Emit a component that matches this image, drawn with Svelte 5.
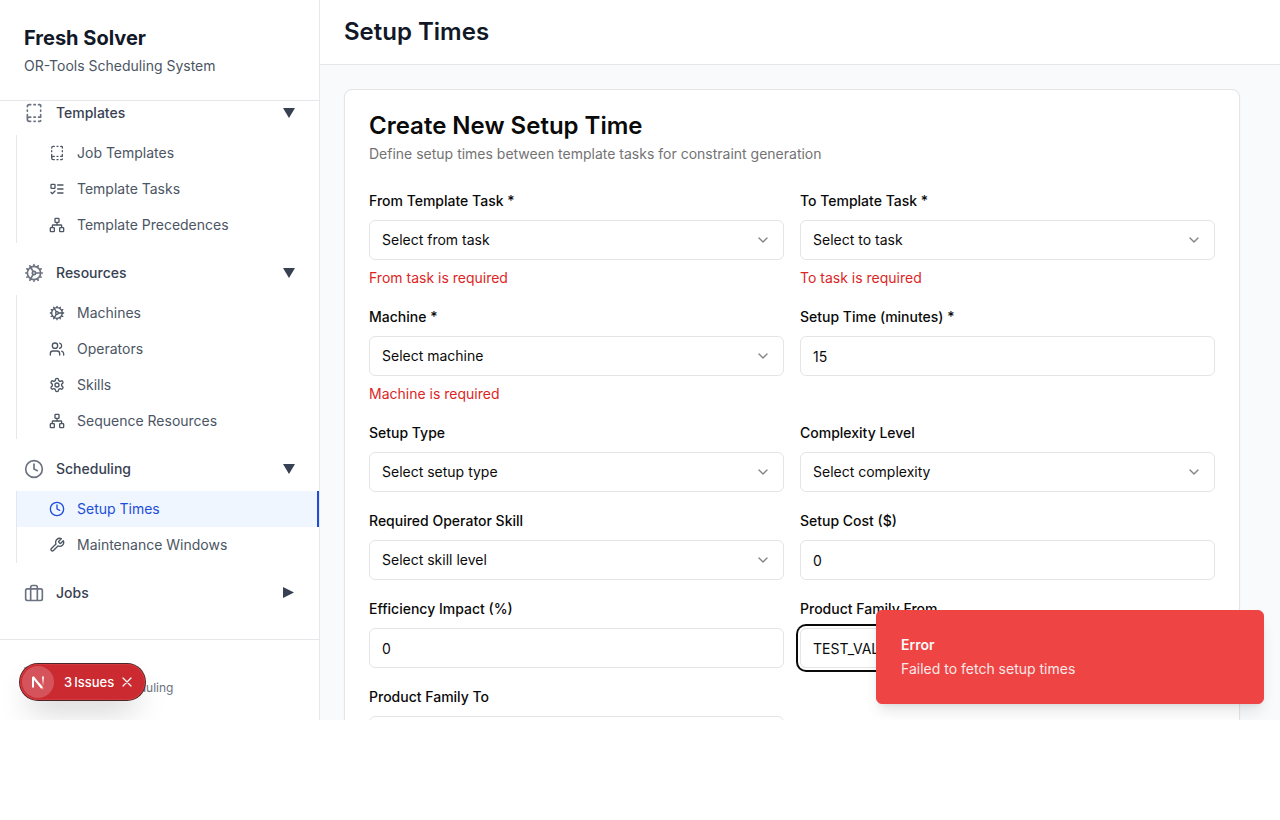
<script>
  const icons = {
    template:
      'M12 17h1.5M12 22h1.5M12 2h1.5M17.5 22H19a1 1 0 0 0 1-1M17.5 2H19a1 1 0 0 1 1 1v1.5M20 14v3h-2.5M20 8.5V10M4 10V8.5M4 19.5V14M4 4.5A2.5 2.5 0 0 1 6.5 2H8M8 22H6.5a1 1 0 0 1 0-5H8',
    tasks:
      'M4 5h4a1 1 0 0 1 1 1v4a1 1 0 0 1-1 1H4a1 1 0 0 1-1-1V6a1 1 0 0 1 1-1zM3 17l2 2 4-4M13 6h8M13 12h8M13 18h8',
    network:
      'M17 16h4a1 1 0 0 1 1 1v4a1 1 0 0 1-1 1h-4a1 1 0 0 1-1-1v-4a1 1 0 0 1 1-1zM3 16h4a1 1 0 0 1 1 1v4a1 1 0 0 1-1 1H3a1 1 0 0 1-1-1v-4a1 1 0 0 1 1-1zM10 2h4a1 1 0 0 1 1 1v4a1 1 0 0 1-1 1h-4a1 1 0 0 1-1-1V3a1 1 0 0 1 1-1zM5 16v-3a1 1 0 0 1 1-1h12a1 1 0 0 1 1 1v3M12 12V8',
    cog: 'M12 20a8 8 0 1 0 0-16 8 8 0 0 0 0 16ZM12 14a2 2 0 1 0 0-4 2 2 0 0 0 0 4ZM12 2v2M12 22v-2M17 20.66l-1-1.73M11 10.27 7 3.34M20.66 17l-1.73-1M3.34 7l1.73 1M14 12h8M2 12h2M20.66 7l-1.73 1M3.34 17l1.73-1M17 3.34l-1 1.73M11 13.73l-4 6.93',
    users:
      'M16 21v-2a4 4 0 0 0-4-4H6a4 4 0 0 0-4 4v2M9 11a4 4 0 1 0 0-8 4 4 0 0 0 0 8zM22 21v-2a4 4 0 0 0-3-3.87M16 3.13a4 4 0 0 1 0 7.75',
    settings:
      'M12.22 2h-.44a2 2 0 0 0-2 2v.18a2 2 0 0 1-1 1.73l-.43.25a2 2 0 0 1-2 0l-.15-.08a2 2 0 0 0-2.73.73l-.22.38a2 2 0 0 0 .73 2.73l.15.1a2 2 0 0 1 1 1.72v.51a2 2 0 0 1-1 1.74l-.15.09a2 2 0 0 0-.73 2.73l.22.38a2 2 0 0 0 2.73.73l.15-.08a2 2 0 0 1 2 0l.43.25a2 2 0 0 1 1 1.73V20a2 2 0 0 0 2 2h.44a2 2 0 0 0 2-2v-.18a2 2 0 0 1 1-1.73l.43-.25a2 2 0 0 1 2 0l.15.08a2 2 0 0 0 2.73-.73l.22-.39a2 2 0 0 0-.73-2.73l-.15-.08a2 2 0 0 1-1-1.74v-.5a2 2 0 0 1 1-1.74l.15-.09a2 2 0 0 0 .73-2.73l-.22-.38a2 2 0 0 0-2.73-.73l-.15.08a2 2 0 0 1-2 0l-.43-.25a2 2 0 0 1-1-1.73V4a2 2 0 0 0-2-2zM12 15a3 3 0 1 0 0-6 3 3 0 0 0 0 6z',
    clock: 'M12 22a10 10 0 1 0 0-20 10 10 0 0 0 0 20zM12 6v6l4 2',
    wrench:
      'M14.7 6.3a1 1 0 0 0 0 1.4l1.6 1.6a1 1 0 0 0 1.4 0l3.77-3.77a6 6 0 0 1-7.94 7.94l-6.91 6.91a2.12 2.12 0 0 1-3-3l6.91-6.91a6 6 0 0 1 7.94-7.94l-3.76 3.76z',
    briefcase:
      'M4 7h16a2 2 0 0 1 2 2v10a2 2 0 0 1-2 2H4a2 2 0 0 1-2-2V9a2 2 0 0 1 2-2zM16 21V5a2 2 0 0 0-2-2h-4a2 2 0 0 0-2 2v16',
  };

  let groups = $state([
    {
      label: 'Templates', icon: 'template', open: true,
      items: [
        { label: 'Job Templates', icon: 'template' },
        { label: 'Template Tasks', icon: 'tasks' },
        { label: 'Template Precedences', icon: 'network' },
      ],
    },
    {
      label: 'Resources', icon: 'cog', open: true,
      items: [
        { label: 'Machines', icon: 'cog' },
        { label: 'Operators', icon: 'users' },
        { label: 'Skills', icon: 'settings' },
        { label: 'Sequence Resources', icon: 'network' },
      ],
    },
    {
      label: 'Scheduling', icon: 'clock', open: true,
      items: [
        { label: 'Setup Times', icon: 'clock', active: true },
        { label: 'Maintenance Windows', icon: 'wrench' },
      ],
    },
    { label: 'Jobs', icon: 'briefcase', open: false, items: [] },
  ]);

  const fields = [
    { id: 'from-task', label: 'From Template Task *', select: 'Select from task', error: 'From task is required' },
    { id: 'to-task', label: 'To Template Task *', select: 'Select to task', error: 'To task is required' },
    { id: 'machine', label: 'Machine *', select: 'Select machine', error: 'Machine is required' },
    { id: 'setup-time', label: 'Setup Time (minutes) *', value: '15' },
    { id: 'setup-type', label: 'Setup Type', select: 'Select setup type' },
    { id: 'complexity', label: 'Complexity Level', select: 'Select complexity' },
    { id: 'skill', label: 'Required Operator Skill', select: 'Select skill level' },
    { id: 'cost', label: 'Setup Cost ($)', value: '0' },
    { id: 'efficiency', label: 'Efficiency Impact (%)', value: '0' },
    { id: 'family-from', label: 'Product Family From', value: 'TEST_VALUE', focused: true },
    { id: 'family-to', label: 'Product Family To', value: '' },
  ];
</script>

{#snippet icon(name, size)}
  <svg class="icon" width={size} height={size} viewBox="0 0 24 24" aria-hidden="true">
    <path d={icons[name]} />
  </svg>
{/snippet}

<div class="app">
  <aside class="sidebar">
    <div class="brand">
      <h1>Fresh Solver</h1>
      <p>OR-Tools Scheduling System</p>
    </div>

    <nav>
      {#each groups as group}
        <div class="group">
          <button class="group-toggle" aria-expanded={group.open} onclick={() => (group.open = !group.open)}>
            {@render icon(group.icon, 20)}
            <span>{group.label}</span>
            <svg class="arrow" width="12" height="12" viewBox="0 0 12 12" aria-hidden="true">
              <path d={group.open ? 'M0 1h12L6 11z' : 'M0 0v11l11-5.500z'} />
            </svg>
          </button>
          {#if group.open}
            <ul>
              {#each group.items as item}
                <li>
                  <a href="#top" class:active={item.active}>
                    {@render icon(item.icon, 16)}
                    <span>{item.label}</span>
                  </a>
                </li>
              {/each}
            </ul>
          {/if}
        </div>
      {/each}
    </nav>

    <footer>
      <p>Version 1.0.0</p>
      <p>Manufacturing Scheduling</p>
    </footer>
  </aside>

  <main>
    <header>
      <h2>Setup Times</h2>
    </header>

    <div class="content">
      <section class="card">
        <div class="card-head">
          <h3>Create New Setup Time</h3>
          <p>Define setup times between template tasks for constraint generation</p>
        </div>
        <form>
          {#each fields as field}
            <div class="field">
              <label for={field.id}>{field.label}</label>
              {#if field.select}
                <div class="select">
                  <select id={field.id}>
                    <option>{field.select}</option>
                  </select>
                  <svg class="icon" width="16" height="16" viewBox="0 0 24 24" aria-hidden="true">
                    <path d="m6 9 6 6 6-6" />
                  </svg>
                </div>
              {:else}
                <input id={field.id} type="text" value={field.value} class:focused={field.focused} />
              {/if}
              {#if field.error}
                <p class="error">{field.error}</p>
              {/if}
            </div>
          {/each}
        </form>
      </section>
    </div>
  </main>

  <div class="toast" role="alert">
    <strong>Error</strong>
    <p>Failed to fetch setup times</p>
  </div>

  <div class="issues">
    <button class="logo" aria-label="Open developer tools">
      <svg width="32" height="32" viewBox="0 0 32 32" fill="none" aria-hidden="true">
        <defs>
          <linearGradient id="diag" x1="17" y1="17" x2="22" y2="24" gradientUnits="userSpaceOnUse">
            <stop stop-color="#fff" />
            <stop offset="1" stop-color="#fff" stop-opacity="0" />
          </linearGradient>
          <linearGradient id="stem" x1="21" y1="10" x2="21" y2="20" gradientUnits="userSpaceOnUse">
            <stop stop-color="#fff" />
            <stop offset="1" stop-color="#fff" stop-opacity="0" />
          </linearGradient>
        </defs>
        <path d="M11 21.500V11l9 11" stroke="#fff" stroke-width="2" stroke-linejoin="bevel" />
        <path d="M17 18l4.500 5.500" stroke="url(#diag)" stroke-width="2" />
        <path d="M21 10.500v10" stroke="url(#stem)" stroke-width="2" />
      </svg>
    </button>
    <button class="count"><span>3</span><span>Issues</span></button>
    <button class="close" aria-label="Collapse issues badge">
      <svg width="12" height="12" viewBox="0 0 12 12" aria-hidden="true">
        <path d="M2 2l8 8M10 2l-8 8" />
      </svg>
    </button>
  </div>
</div>

<style>
  :global(body) {
    background: #fff;
  }

  .app,
  .app * {
    box-sizing: border-box;
  }

  .app {
    position: relative;
    display: flex;
    height: calc(100vh - 100px);
    font-family: Inter, sans-serif;
    font-size: 14px;
    line-height: 20px;
    color: #0a0a0a;
  }

  h1, h2, h3, p, ul {
    margin: 0;
    padding: 0;
  }

  button, input, select {
    margin: 0;
    font: inherit;
    color: inherit;
  }

  button {
    padding: 0;
    border: 0;
    background: none;
    cursor: pointer;
  }

  .icon {
    flex: none;
    fill: none;
    stroke: currentColor;
    stroke-width: 2;
    stroke-linecap: round;
    stroke-linejoin: round;
  }

  .sidebar {
    display: flex;
    flex: none;
    flex-direction: column;
    width: 320px;
    border-right: 1px solid #e5e7eb;
    background: #fff;
  }

  .brand {
    padding: 24px;
    border-bottom: 1px solid #e5e7eb;
  }

  h1 {
    font-size: 20px;
    font-weight: 700;
    line-height: 28px;
    color: #111827;
  }

  .brand p {
    margin-top: 4px;
    color: #4b5563;
  }

  nav {
    display: flex;
    flex: 1;
    flex-direction: column;
    justify-content: flex-end;
    gap: 8px;
    min-height: 0;
    padding-bottom: 24px;
    overflow: hidden;
  }

  .group {
    flex: none;
  }

  .group-toggle {
    display: flex;
    align-items: center;
    gap: 12px;
    width: 100%;
    height: 44px;
    padding: 0 24px;
    font-weight: 500;
    text-align: left;
    color: #374151;
  }

  .group-toggle .icon {
    color: #6b7280;
  }

  .group-toggle span {
    flex: 1;
  }

  .arrow {
    fill: #374151;
  }

  ul {
    margin-left: 16px;
    border-left: 1px solid #e5e7eb;
    list-style: none;
  }

  a {
    display: flex;
    align-items: center;
    gap: 12px;
    height: 36px;
    padding-left: 32px;
    color: #4b5563;
    text-decoration: none;
  }

  a.active {
    border-right: 2px solid #1d4ed8;
    background: #eff6ff;
    color: #1d4ed8;
  }

  footer {
    padding: 24px;
    border-top: 1px solid #e5e7eb;
    font-size: 12px;
    line-height: 16px;
    color: #6b7280;
  }

  main {
    display: flex;
    flex: 1;
    flex-direction: column;
    min-width: 0;
    background: #f9fafb;
  }

  header {
    flex: none;
    padding: 16px 24px;
    border-bottom: 1px solid #e5e7eb;
    background: #fff;
  }

  h2 {
    font-size: 24px;
    font-weight: 600;
    line-height: 32px;
    color: #111827;
  }

  .content {
    flex: 1;
    min-height: 0;
    padding: 24px 40px 0 24px;
    overflow: hidden;
  }

  .card {
    border: 1px solid #e5e5e5;
    border-radius: 8px;
    background: #fff;
    box-shadow: 0 1px 2px rgb(0 0 0 / 5%);
  }

  .card-head {
    padding: 24px;
  }

  h3 {
    font-size: 24px;
    font-weight: 600;
    line-height: 24px;
  }

  .card-head p {
    margin-top: 6px;
    color: #737373;
  }

  form {
    display: grid;
    grid-template-columns: 1fr 1fr;
    gap: 16px;
    padding: 0 24px 24px;
  }

  .field {
    display: flex;
    flex-direction: column;
    gap: 8px;
  }

  label {
    padding-top: 2px;
    font-weight: 500;
    line-height: 22px;
  }

  .select {
    display: grid;
    align-items: center;
  }

  .select > * {
    grid-area: 1 / 1;
  }

  .select .icon {
    justify-self: end;
    margin-right: 13px;
    opacity: 0.5;
    pointer-events: none;
  }

  input,
  select {
    width: 100%;
    height: 40px;
    padding: 0 12px;
    border: 1px solid #e5e5e5;
    border-radius: 6px;
    outline: none;
    background: #fff;
    appearance: none;
  }

  .focused,
  input:focus,
  select:focus {
    box-shadow: 0 0 0 2px #fff, 0 0 0 4px #0a0a0a;
  }

  .error {
    color: #dc2626;
  }

  .toast {
    position: absolute;
    right: 16px;
    bottom: 16px;
    width: 388px;
    padding: 24px;
    border: 1px solid #ef4444;
    border-radius: 6px;
    background: #ef4444;
    color: #fafafa;
    box-shadow: 0 10px 15px -3px rgb(0 0 0 / 10%), 0 4px 6px -4px rgb(0 0 0 / 10%);
  }

  .toast strong {
    display: block;
    font-weight: 600;
  }

  .toast p {
    margin-top: 4px;
    opacity: 0.9;
  }

  .issues {
    position: absolute;
    bottom: 20px;
    left: 20px;
    display: flex;
    align-items: center;
    height: 36px;
    padding: 2px 12px 2px 2px;
    border-radius: 18px;
    background: #ca2a30;
    color: #fff;
    font-size: 13px;
    box-shadow: 0 0 0 1px #4a2528, inset 0 0 0 1px #d33a3f, 0 16px 32px -8px rgb(0 0 0 / 24%);
  }

  .logo {
    width: 32px;
    height: 32px;
    border-radius: 16px;
    background: #d5545b;
  }

  .logo svg {
    display: block;
  }

  .count {
    display: flex;
    gap: 2px;
    margin-left: 10px;
    font-weight: 500;
  }

  .close {
    display: flex;
    margin-left: 7px;
  }

  .close path {
    stroke: #fff;
    stroke-width: 1.2;
    stroke-linecap: round;
  }
</style>
